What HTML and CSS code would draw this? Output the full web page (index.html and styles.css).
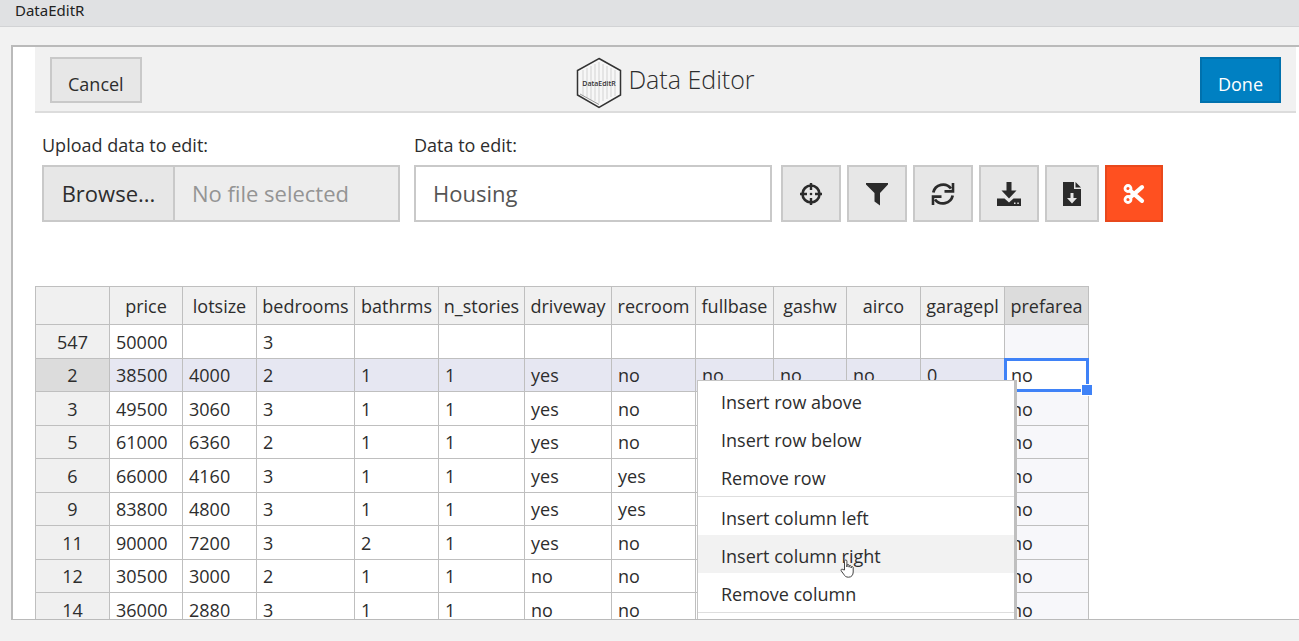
FILE: index.html
```html
<!DOCTYPE html>
<html lang="en">
<head>
<meta charset="utf-8">
<title>DataEditR</title>
<link rel="stylesheet" href="styles.css">
</head>
<body>
<div class="titlebar">DataEditR</div>
<main class="frame">
  <header class="header">
    <button class="btn header-btn" type="button">Cancel</button>
    <h1 class="brand">
      <svg class="logo" viewBox="0 0 46 52" aria-hidden="true">
        <path d="M23 1.500 44.500 13.500V38L23 50.500 1.500 38V13.500Z" fill="#f7f7f7" stroke="#333" stroke-width="1.500"/>
        <path d="M7 13v26M11 11v30M15 9v34M19 7v37M23 5v41M27 7v37M31 9v33M35 11v29M39 13v26" stroke="#dcdcdc" stroke-width="1.300"/>
        <path d="M4 37 23 47.500" stroke="#999" stroke-width="1"/>
        <text x="23" y="29" text-anchor="middle" class="logo-text">DataEditR</text>
      </svg>
      <span>Data Editor</span>
    </h1>
    <button class="btn header-btn primary" type="button">Done</button>
  </header>

  <form class="toolbar">
    <div class="field">
      <label for="file">Upload data to edit:</label>
      <div class="file-group">
        <button class="btn browse" type="button">Browse...</button>
        <input class="text file-name" id="file" type="text" placeholder="No file selected" readonly>
      </div>
    </div>
    <div class="field">
      <label for="data">Data to edit:</label>
      <input class="text" id="data" type="text" value="Housing">
    </div>
    <div class="actions">
      <button class="btn tool" type="button" aria-label="Select">
        <svg viewBox="0 0 24 24" fill="none" stroke="#2b2b2b"><circle cx="12" cy="12" r="8.500" stroke-width="2.600"/><path d="M12 1v7M12 16v7M1 12h7M16 12h7" stroke-width="2.400"/><circle cx="12" cy="12" r="1.300" fill="#2b2b2b" stroke="none"/></svg>
      </button>
      <button class="btn tool" type="button" aria-label="Filter">
        <svg viewBox="0 0 24 24" fill="#2b2b2b"><path d="M1 1h22v1.500L15 11v12.500L9.500 19.500V11L1 2.500Z"/></svg>
      </button>
      <button class="btn tool" type="button" aria-label="Refresh">
        <svg viewBox="0 0 24 24" fill="none" stroke="#2b2b2b" stroke-width="2.800"><path d="M2.300 10.500A10 10 0 0 1 20 6.500M21.700 13.500A10 10 0 0 1 4 17.500"/><path d="M22 1v8.400h-8.500M2 23v-8.400h8.500" stroke-width="2.600"/></svg>
      </button>
      <button class="btn tool" type="button" aria-label="Download">
        <svg viewBox="0 0 24 24" fill="#2b2b2b"><path d="M9.500 0h5v8.500h5L12 16.500 4.500 8.500h5Z"/><path fill-rule="evenodd" d="M0 16.500h7.500L12 20.500l4.500-4H24V24H0ZM17 20.500v1.500h1.500v-1.500ZM20.300 20.500v1.500h1.500v-1.500Z"/></svg>
      </button>
      <button class="btn tool narrow" type="button" aria-label="Save to file">
        <svg viewBox="0 0 24 24" fill="#2b2b2b"><path fill-rule="evenodd" d="M3 0h11v7h7v17H3ZM10.500 11v5H7l5 5.500 5-5.500h-3.500v-5Z"/><path d="M15.500 0 21 5.500h-5.500Z"/></svg>
      </button>
      <button class="btn tool cut" type="button" aria-label="Cut">
        <svg viewBox="0 0 24 24" fill="none" stroke="#fff"><circle cx="6" cy="6.500" r="3" stroke-width="2.800"/><circle cx="6" cy="17.500" r="3" stroke-width="2.800"/><path d="M8.500 8.800 20 18.800M8.500 15.200 20 5.200" stroke-width="4.200" stroke-linecap="round"/></svg>
      </button>
    </div>
  </form>

  <div class="sheet">
    <table class="grid">
      <colgroup><col class="w-s2"><col class="w-s"><col class="w-s2"><col class="w-xl"><col class="w-m"><col class="w-l"><col class="w-l2"><col class="w-m"><col class="w-f"><col class="w-s"><col class="w-s2"><col class="w-m"><col class="w-m"></colgroup>
      <thead>
        <tr><th></th><th>price</th><th>lotsize</th><th>bedrooms</th><th>bathrms</th><th>n_stories</th><th>driveway</th><th>recroom</th><th>fullbase</th><th>gashw</th><th>airco</th><th>garagepl</th><th class="on">prefarea</th></tr>
      </thead>
      <tbody>
        <tr><th>547</th><td>50000</td><td></td><td>3</td><td></td><td></td><td></td><td></td><td></td><td></td><td></td><td></td><td></td></tr>
        <tr class="current"><th class="on">2</th><td>38500</td><td>4000</td><td>2</td><td>1</td><td>1</td><td>yes</td><td>no</td><td>no</td><td>no</td><td>no</td><td>0</td><td class="active">no</td></tr>
        <tr><th>3</th><td>49500</td><td>3060</td><td>3</td><td>1</td><td>1</td><td>yes</td><td>no</td><td></td><td></td><td></td><td></td><td>no</td></tr>
        <tr><th>5</th><td>61000</td><td>6360</td><td>2</td><td>1</td><td>1</td><td>yes</td><td>no</td><td></td><td></td><td></td><td></td><td>no</td></tr>
        <tr><th>6</th><td>66000</td><td>4160</td><td>3</td><td>1</td><td>1</td><td>yes</td><td>yes</td><td></td><td></td><td></td><td></td><td>no</td></tr>
        <tr><th>9</th><td>83800</td><td>4800</td><td>3</td><td>1</td><td>1</td><td>yes</td><td>yes</td><td></td><td></td><td></td><td></td><td>no</td></tr>
        <tr><th>11</th><td>90000</td><td>7200</td><td>3</td><td>2</td><td>1</td><td>yes</td><td>no</td><td></td><td></td><td></td><td></td><td>no</td></tr>
        <tr><th>12</th><td>30500</td><td>3000</td><td>2</td><td>1</td><td>1</td><td>no</td><td>no</td><td></td><td></td><td></td><td></td><td>no</td></tr>
        <tr><th>14</th><td>36000</td><td>2880</td><td>3</td><td>1</td><td>1</td><td>no</td><td>no</td><td></td><td></td><td></td><td></td><td>no</td></tr>
      </tbody>
    </table>

    <div class="menu">
      <button type="button">Insert row above</button>
      <button type="button">Insert row below</button>
      <button type="button">Remove row</button>
      <hr>
      <button type="button">Insert column left</button>
      <button type="button" class="hover">Insert column right
        <svg class="pointer" viewBox="0 0 14 19" aria-hidden="true"><path d="M4.500 11V2.200a1.200 1.200 0 0 1 2.400 0V8V6.600a1.100 1.100 0 0 1 2.200 0V8.200V7.300a1.100 1.100 0 0 1 2.100 0V9V8.300a1.100 1.100 0 0 1 2 0V13c0 3-1.700 5.200-4.600 5.200-2.600 0-3.800-1-4.900-3L1.200 11.800c-.8-1.400.8-2.200 1.800-1.200Z" fill="#fff" stroke="#444" stroke-width="1"/></svg>
      </button>
      <button type="button">Remove column</button>
      <hr>
    </div>
  </div>
</main>
</body>
</html>
```
FILE: styles.css
```css
* { box-sizing: border-box; }

body {
  margin: 0;
  height: 100vh;
  display: flex;
  flex-direction: column;
  overflow: hidden;
  background: #f2f2f2;
  color: #2d2d2d;
  font-family: "Open Sans", "Noto Sans", sans-serif;
  font-size: 18px;
}

button, input { font: inherit; color: inherit; border-radius: 0; }

.titlebar {
  height: 27px;
  flex: none;
  padding-left: 15px;
  border-bottom: 1px solid #d2d3d5;
  background: #e0e1e3;
  color: #222;
  font-family: "Noto Sans", sans-serif;
  font-size: 15px;
  line-height: 20px;
}

.frame {
  flex: 1;
  min-height: 0;
  margin: 18px 0 21px 11px;
  overflow: hidden;
  border: 2px solid #bababa;
  border-width: 2px 0 1px 2px;
  background: #fff;
}

.header {
  display: grid;
  grid-template-columns: 1fr auto 1fr;
  align-items: start;
  height: 66px;
  margin: 0 3px 0 22px;
  padding: 10px 15px 0;
  border-bottom: 2px solid #dcdcdc;
  background: #f1f1f1;
}

.btn {
  border: 2px solid #c9c9c9;
  background: #e7e7e7;
}

.header-btn {
  justify-self: start;
  height: 46px;
  padding: 8px 16px 0;
}

.primary {
  justify-self: end;
  border-color: #0071ad;
  background: #0080c2;
  color: #fff;
}

.brand {
  display: flex;
  gap: 6px;
  margin: 0;
  font-size: 25px;
  font-weight: 300;
  line-height: 44px;
}

.logo { width: 46px; height: 52px; }

.logo-text { font-size: 7px; font-weight: 600; fill: #333; }

.toolbar {
  display: flex;
  align-items: flex-end;
  gap: 14px;
  margin: 0;
  padding: 19px 29px 0;
}

.field {
  width: 358px;
  display: flex;
  flex-direction: column;
  gap: 7px;
}

.field label { line-height: 26px; }

.file-group { display: flex; }

.text {
  width: 100%;
  min-width: 0;
  height: 57px;
  padding: 0 17px 2px;
  border: 2px solid #c9c9c9;
  background: #fff;
  color: #555;
  font-size: 22px;
}

.browse {
  flex: none;
  width: 131px;
  padding: 0 0 2px;
  border-right: 0;
  font-size: 22px;
}

.file-name { background: #ededed; }

.file-name::placeholder { color: #949494; }

.actions { display: flex; gap: 6px; margin-left: -5px; }

.tool {
  width: 60px;
  height: 57px;
  padding: 0;
  display: grid;
  place-items: center;
}

.tool svg { width: 24px; height: 24px; }

.narrow { width: 54px; }

.cut { width: 58px; border-color: #e8481c; background: #ff5020; }

.sheet { position: relative; margin: 64px 0 0 22px; }

.grid {
  width: 1053px;
  table-layout: fixed;
  border-collapse: collapse;
}

.w-s { width: 73px; }
.w-s2 { width: 74px; }
.w-f { width: 78px; }
.w-m { width: 84px; }
.w-l { width: 86px; }
.w-l2 { width: 87px; }
.w-xl { width: 98px; }

.grid th, .grid td {
  padding: 0 6px;
  border: 1px solid #bfbfbf;
  line-height: 24px;
  white-space: nowrap;
}

.grid th {
  padding: 0;
  background: #f0f0f0;
  font-weight: 400;
  text-align: center;
}

.grid thead tr { height: 38px; }
.grid tbody tr { height: 34px; }
.grid tbody tr:nth-child(even) { height: 33px; }

.grid td:last-child { background: #f7f7fa; }

.grid .current td { background: #e6e7f2; }

.grid th.on { background: #dcdcdc; }

.grid .current .active { position: relative; background: #fff; }

.active::before {
  content: "";
  position: absolute;
  inset: -1px;
  border: 3px solid #3f82f7;
}

.active::after {
  content: "";
  position: absolute;
  right: -5px;
  bottom: -5px;
  width: 10px;
  height: 10px;
  border: 1px solid #fff;
  background: #3f82f7;
}

.menu {
  position: absolute;
  top: 94px;
  left: 662px;
  width: 320px;
  padding-bottom: 12px;
  border: 1px solid #c4c4c4;
  border-right: 3px solid #bfbfbf;
  background: #fff;
}

.menu button {
  position: relative;
  display: block;
  width: 100%;
  height: 38px;
  padding: 8px 23px 4px;
  border: 0;
  background: none;
  line-height: 26px;
  text-align: left;
}

.menu .hover { background: #f2f2f2; }

.menu hr {
  margin: 1px 0 0;
  border: 0;
  border-top: 1px solid #dedede;
}

.pointer {
  position: absolute;
  top: 24px;
  left: 142px;
  width: 14px;
  height: 19px;
  z-index: 1;
}
```
